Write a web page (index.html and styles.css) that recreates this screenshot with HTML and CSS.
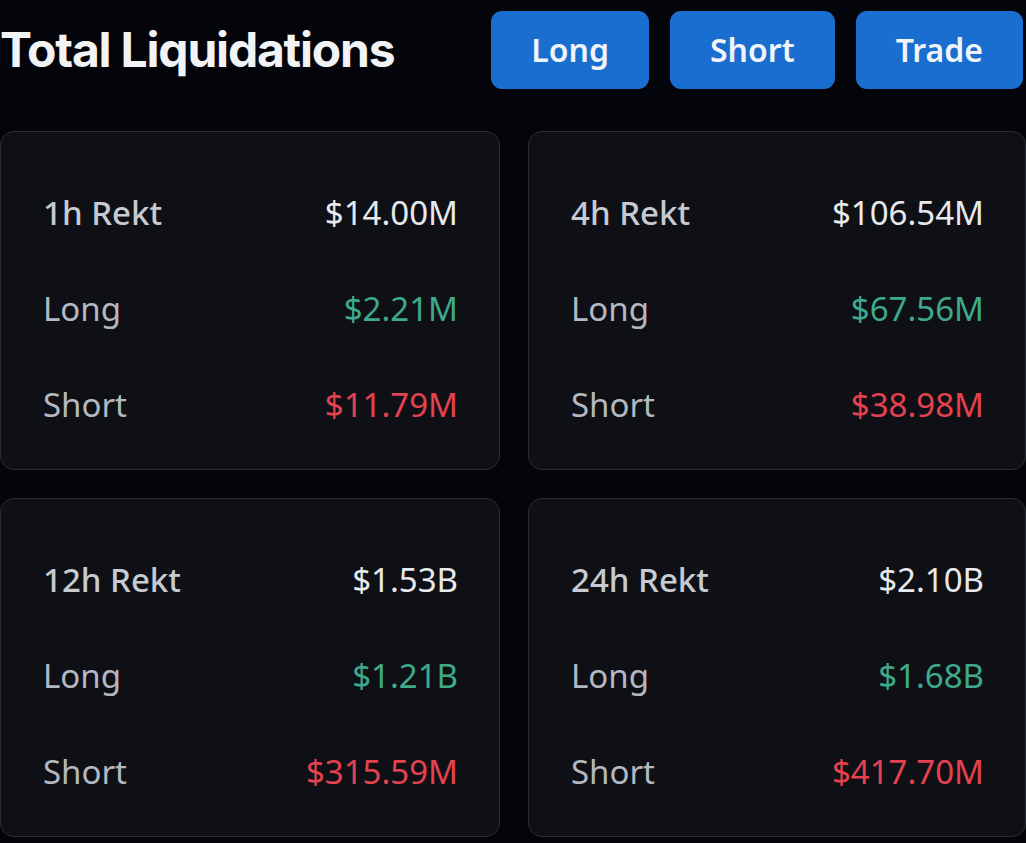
FILE: index.html
```html
<!DOCTYPE html>
<html lang="en">
<head>
<meta charset="utf-8">
<title>Total Liquidations</title>
<link rel="stylesheet" href="styles.css">
</head>
<body>
<div class="page">
  <header class="header">
    <h1 class="title">Total Liquidations</h1>
    <div class="actions">
      <button class="btn">Long</button>
      <button class="btn">Short</button>
      <button class="btn">Trade</button>
    </div>
  </header>
  <main class="grid">
    <section class="card">
      <div class="row head"><span class="label">1h Rekt</span><span class="value">$14.00M</span></div>
      <div class="row"><span class="label">Long</span><span class="value up">$2.21M</span></div>
      <div class="row"><span class="label">Short</span><span class="value down">$11.79M</span></div>
    </section>
    <section class="card">
      <div class="row head"><span class="label">4h Rekt</span><span class="value">$106.54M</span></div>
      <div class="row"><span class="label">Long</span><span class="value up">$67.56M</span></div>
      <div class="row"><span class="label">Short</span><span class="value down">$38.98M</span></div>
    </section>
    <section class="card">
      <div class="row head"><span class="label">12h Rekt</span><span class="value">$1.53B</span></div>
      <div class="row"><span class="label">Long</span><span class="value up">$1.21B</span></div>
      <div class="row"><span class="label">Short</span><span class="value down">$315.59M</span></div>
    </section>
    <section class="card">
      <div class="row head"><span class="label">24h Rekt</span><span class="value">$2.10B</span></div>
      <div class="row"><span class="label">Long</span><span class="value up">$1.68B</span></div>
      <div class="row"><span class="label">Short</span><span class="value down">$417.70M</span></div>
    </section>
  </main>
</div>
</body>
</html>
```
FILE: styles.css
```css
html, body {
  margin: 0;
  padding: 0;
  background: #04050b;
}
.page {
  width: 1026px;
  height: 843px;
  overflow: hidden;
  font-family: "Noto Sans", "Open Sans", sans-serif;
}
.header {
  display: flex;
  align-items: center;
  justify-content: space-between;
  height: 99px;
  padding: 0 3px 0 0;
  margin-bottom: 32px;
}
.title {
  margin: 0;
  font-family: Inter, "Liberation Sans", sans-serif;
  font-weight: 700;
  font-size: 48px;
  letter-spacing: -1.2px;
  color: #f2f3f5;
}
.actions {
  display: flex;
  gap: 21px;
}
.btn {
  height: 78px;
  padding: 0 40px;
  border: none;
  border-radius: 11px;
  background: #1a6ed0;
  color: #f1f4f8;
  font-family: "Noto Sans", "Open Sans", sans-serif;
  font-weight: 600;
  font-size: 32px;
}
.grid {
  display: grid;
  grid-template-columns: 500px 498px;
  gap: 28px;
}
.card {
  height: 339px;
  box-sizing: border-box;
  padding: 32px 41px 17px 42px;
  border: 1.5px solid #2b2e36;
  border-radius: 14px;
  background: #0e1015;
}
.row {
  display: flex;
  justify-content: space-between;
  align-items: center;
  height: 96px;
  font-size: 33px;
  color: #b4b8c0;
}
.head .label {
  font-weight: 500;
  color: #c6cad1;
}
.value {
  color: #e7e9ec;
}
.value.up {
  color: #3ea98b;
}
.value.down {
  color: #e5414f;
}
```
